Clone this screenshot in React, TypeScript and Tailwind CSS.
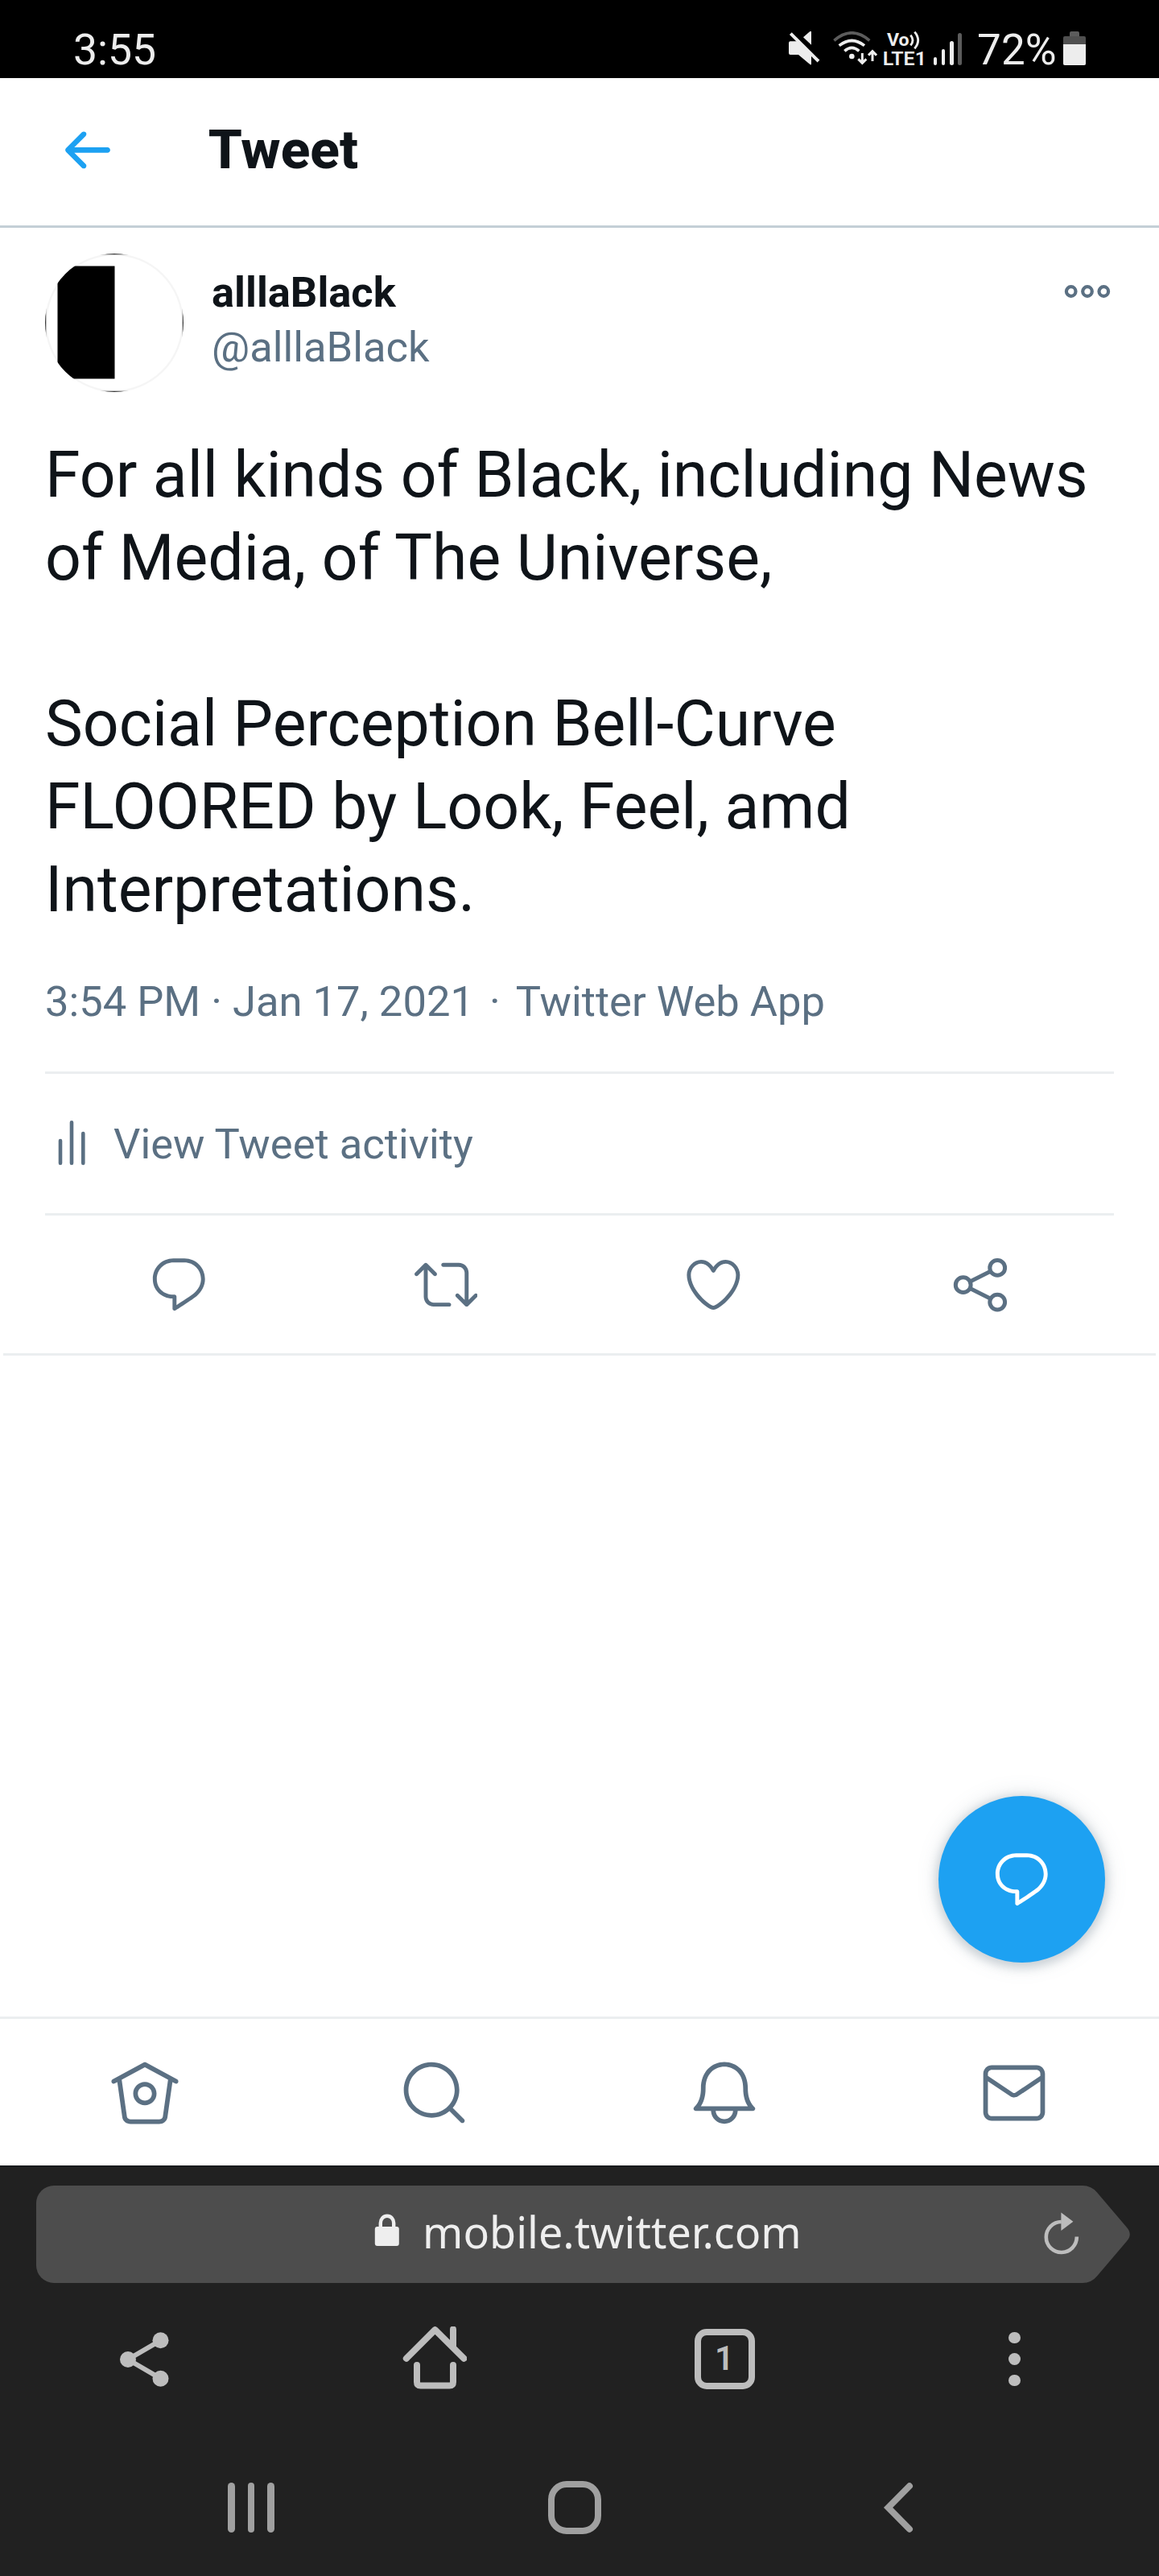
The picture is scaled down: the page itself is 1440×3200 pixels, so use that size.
import React from "react";

const REPLY =
  "M14.046 2.242l-4.148-.01h-.002c-4.374 0-7.8 3.427-7.8 7.802 0 4.098 3.186 7.206 7.465 7.37v3.828c0 .108.044.286.12.403.142.225.384.347.632.347.138 0 .277-.038.402-.118.264-.168 6.473-4.14 8.088-5.506 1.902-1.61 3.04-3.97 3.043-6.312v-.017c-.006-4.367-3.43-7.787-7.8-7.788zm3.787 12.972c-1.134.96-4.862 3.405-6.772 4.643V16.67c0-.414-.335-.75-.75-.75h-.396c-3.66 0-6.318-2.476-6.318-5.886 0-3.534 2.768-6.302 6.3-6.302l4.147.01h.002c3.532 0 6.3 2.766 6.302 6.296-.003 1.91-.942 3.844-2.514 5.176z";
const RETWEET =
  "M23.77 15.67c-.292-.293-.767-.293-1.06 0l-2.22 2.22V7.65c0-2.068-1.683-3.75-3.75-3.75h-5.85c-.414 0-.75.336-.75.75s.336.75.75.75h5.85c1.24 0 2.25 1.01 2.25 2.25v10.24l-2.22-2.22c-.293-.293-.768-.293-1.06 0s-.294.768 0 1.06l3.5 3.5c.145.147.337.22.53.22s.383-.072.53-.22l3.5-3.5c.294-.292.294-.767 0-1.06zm-10.66 3.28H7.26c-1.24 0-2.25-1.01-2.25-2.25V6.46l2.22 2.22c.148.147.34.22.532.22s.384-.073.53-.22c.293-.293.293-.768 0-1.06l-3.5-3.5c-.293-.294-.768-.294-1.06 0l-3.5 3.5c-.294.292-.294.767 0 1.06s.767.293 1.06 0l2.22-2.22V16.7c0 2.068 1.683 3.75 3.75 3.75h5.85c.414 0 .75-.336.75-.75s-.337-.75-.75-.75z";
const HEART =
  "M12 21.638h-.014C9.403 21.59 1.95 14.856 1.95 8.478c0-3.064 2.525-5.754 5.403-5.754 2.29 0 3.83 1.58 4.646 2.73.814-1.148 2.354-2.73 4.645-2.73 2.88 0 5.404 2.69 5.404 5.755 0 6.376-7.454 13.11-10.037 13.157H12zM7.354 4.225c-2.08 0-3.903 1.988-3.903 4.255 0 5.74 7.034 11.596 8.55 11.658 1.518-.062 8.55-5.917 8.55-11.658 0-2.267-1.823-4.255-3.903-4.255-2.528 0-3.94 2.936-3.952 2.965-.23.562-1.156.562-1.387 0-.014-.03-1.425-2.965-3.954-2.965z";
const BACK =
  "M20 11H7.414l4.293-4.293c.39-.39.39-1.023 0-1.414s-1.023-.39-1.414 0l-6 6c-.39.39-.39 1.023 0 1.414l6 6c.195.195.45.293.707.293s.512-.098.707-.293c.39-.39.39-1.023 0-1.414L7.414 13H20c.553 0 1-.447 1-1s-.447-1-1-1z";
const HOME =
  "M22.46 7.57L12.357 2.115c-.223-.12-.49-.12-.713 0L1.543 7.57c-.364.197-.5.652-.303 1.017.135.25.394.393.66.393.12 0 .243-.03.356-.09l.815-.44L4.7 19.963c.214 1.215 1.308 2.062 2.658 2.062h9.282c1.352 0 2.445-.848 2.663-2.087l1.626-11.49.818.442c.364.193.82.06 1.017-.304.196-.363.06-.818-.304-1.016zm-4.638 12.133c-.107.606-.703.822-1.18.822H7.36c-.48 0-1.075-.216-1.178-.798L4.48 7.69 12 3.628l7.522 4.06-1.7 12.015zM8.22 12.184c0 2.084 1.695 3.78 3.78 3.78s3.78-1.696 3.78-3.78-1.695-3.78-3.78-3.78-3.78 1.696-3.78 3.78zm6.06 0c0 1.258-1.022 2.28-2.28 2.28s-2.28-1.022-2.28-2.28 1.022-2.28 2.28-2.28 2.28 1.022 2.28 2.28z";
const SEARCH =
  "M21.53 20.47l-3.66-3.66C19.195 15.24 20 13.214 20 11c0-4.97-4.03-9-9-9s-9 4.03-9 9 4.03 9 9 9c2.215 0 4.24-.804 5.808-2.13l3.66 3.66c.147.146.34.22.53.22s.385-.073.53-.22c.295-.293.295-.767.002-1.06zM3.5 11c0-4.135 3.365-7.5 7.5-7.5s7.5 3.365 7.5 7.5-3.365 7.5-7.5 7.5-7.5-3.365-7.5-7.5z";
const BELL =
  "M21.697 16.468c-.02-.016-2.14-1.64-2.103-6.03.02-2.532-.812-4.782-2.347-6.335C15.872 2.71 14.01 1.94 12.005 1.93h-.013c-2.004.01-3.866.78-5.242 2.174-1.534 1.553-2.368 3.802-2.346 6.334.037 4.33-2.02 5.967-2.102 6.03-.26.193-.366.53-.265.838.102.308.39.515.712.515h4.92c.102 2.31 1.997 4.16 4.33 4.16s4.226-1.85 4.327-4.16h4.922c.322 0 .61-.206.71-.514.103-.307-.003-.645-.263-.838zM12 20.478c-1.505 0-2.73-1.177-2.828-2.658h5.656c-.1 1.48-1.323 2.66-2.828 2.66zM4.38 16.32c.74-1.132 1.548-3.028 1.524-5.896-.018-2.16.644-3.982 1.913-5.267C8.91 4.05 10.397 3.437 12 3.43c1.603.008 3.087.62 4.18 1.728 1.27 1.285 1.933 3.106 1.915 5.267-.024 2.868.785 4.765 1.525 5.896H4.38z";
const MAIL =
  "M19.25 3.018H4.75C3.233 3.018 2 4.252 2 5.77v12.495c0 1.518 1.233 2.753 2.75 2.753h14.5c1.517 0 2.75-1.235 2.75-2.753V5.77c0-1.518-1.233-2.752-2.75-2.752zm-14.5 1.5h14.5c.69 0 1.25.56 1.25 1.25v.714l-8.05 5.367c-.273.18-.626.182-.9-.002L3.5 6.482v-.714c0-.69.56-1.25 1.25-1.25zm14.5 14.998H4.75c-.69 0-1.25-.56-1.25-1.25V8.24l7.24 4.83c.383.256.822.384 1.26.384.44 0 .877-.128 1.26-.383l7.24-4.83v10.022c0 .69-.56 1.25-1.25 1.25z";

function Glyph({ d, className }: { d: string; className: string }) {
  return (
    <svg viewBox="0 0 24 24" fill="currentColor" className={className}>
      <path d={d} />
    </svg>
  );
}

function StatusIcons() {
  return (
    <div className="flex items-start">
      {/* Muted speaker */}
      <svg className="h-[42px] w-[39px]" viewBox="119 116 117 126" fill="#ededed">
        <path d="M125 153H150L203 206V240H199L155 203H125Q119 203 119 197V159Q119 153 125 153Z" />
        <path d="M173 138L198 116H203V166Z" />
        <path d="M126 124L230 227" stroke="#ededed" strokeWidth="12" />
      </svg>
      {/* Wi-Fi with transfer arrows */}
      <svg className="ml-[16px] h-[42px] w-[55px]" viewBox="284 116 165 126" fill="none" stroke="#ededed" strokeWidth="11">
        <path d="M288 150Q354 93 420 150" stroke="#5c5c5c" />
        <path d="M307 169Q354 132 401 169" />
        <path d="M327 189Q354 165 381 189" />
        <circle cx="354" cy="209" r="10" fill="#ededed" stroke="none" />
        <path d="M393 197V232M378 219L393 234L408 219" strokeWidth="9" />
        <path d="M431 227V191M416 205L431 190L446 205" strokeWidth="9" />
      </svg>
      {/* VoLTE badge */}
      <svg className="ml-[7px] h-[42px] w-[51px] overflow-visible font-[Roboto]" viewBox="470 116 153 126" fill="#ededed">
        <text x="485" y="169" fontSize="67" fontWeight="700" textLength="83" lengthAdjust="spacingAndGlyphs">Vo</text>
        <path d="M573 130Q589 149 573 168M588 118Q614 149 588 180" fill="none" stroke="#ededed" strokeWidth="8.5" />
        <text x="469" y="241" fontSize="73" fontWeight="600" textLength="163" lengthAdjust="spacingAndGlyphs">LTE1</text>
      </svg>
      {/* Cellular signal */}
      <div className="ml-[12px] flex h-[42px] items-end gap-[5.67px]">
        <div className="h-[10px] w-[4.67px] rounded-full bg-[#ededed]" />
        <div className="h-[20px] w-[4.67px] rounded-full bg-[#ededed]" />
        <div className="h-[30px] w-[4.67px] rounded-full bg-[#ededed]" />
        <div className="h-[39.5px] w-[4.67px] rounded-full bg-[#5c5c5c]" />
      </div>
    </div>
  );
}

function StatusBar() {
  return (
    <div className="flex h-[97px] items-start bg-black text-[#ededed]">
      <div className="w-[889px] pt-[35px] pl-[91px] text-[53.5px] leading-[54px]">3:55</div>
      <div className="ml-[90.5px] pt-[38.5px]">
        <StatusIcons />
      </div>
      <div className="ml-[19px] w-[98px] pt-[35px] text-[53px] leading-[54px]">72%</div>
      <div className="ml-[9px] flex flex-col items-center pt-[38.5px]">
        <div className="h-[6px] w-[12.5px] rounded-t-[2px] bg-[#5c5c5c]" />
        <div className="flex h-[36px] w-[28px] flex-col justify-end overflow-hidden rounded-[2px] bg-[#505050]">
          <div className="h-[25.5px] bg-[#ededed]" />
        </div>
      </div>
    </div>
  );
}

function Avatar() {
  return (
    <svg className="h-[172px] w-[172px] shrink-0" viewBox="0 0 172 172">
      <defs>
        <clipPath id="avatar-round">
          <circle cx="86" cy="86" r="86" />
        </clipPath>
      </defs>
      <g clipPath="url(#avatar-round)">
        <rect width="172" height="172" fill="#fff" />
        <path d="M0 0.7H172M0 171.3H172M0.6 0V172M171.4 0V172" stroke="#3a3a3a" strokeWidth="1.3" />
        <rect x="15.5" y="15.5" width="71" height="140" fill="#000" />
      </g>
      <circle cx="86" cy="86" r="84.8" fill="none" stroke="#000" strokeOpacity="0.04" strokeWidth="2.4" />
    </svg>
  );
}

function Tweet() {
  return (
    <div className="h-[1398px]">
      <div className="px-14">
        <div className="flex pt-8">
          <Avatar />
          <div className="ml-[35px] flex-1 pt-[14px] text-[52.5px] leading-[68px]">
            <div className="font-bold">alllaBlack</div>
            <div className="text-[#5b7083]">@alllaBlack</div>
          </div>
          <svg className="mt-[37px] mr-[3px] h-5 w-[60px]" viewBox="0 0 60 20" fill="none" stroke="#5b7083" strokeWidth="4.2">
            <circle cx="9.7" cy="10" r="5.8" />
            <circle cx="30" cy="10" r="5.8" />
            <circle cx="50.3" cy="10" r="5.8" />
          </svg>
        </div>
        <div className="mt-[52px] text-[78.75px] leading-[103px] whitespace-pre">
          <p>For all kinds of Black, including News</p>
          <p>of Media, of The Universe,</p>
          <p>&nbsp;</p>
          <p>Social Perception Bell-Curve</p>
          <p>FLOORED by Look, Feel, amd</p>
          <p>Interpretations.</p>
        </div>
        <div className="mt-[52px] h-[122px] text-[52.5px] leading-[70px] whitespace-pre text-[#5b7083]">
          3:54 PM · Jan 17, 2021<span className="px-[19px]">·</span>Twitter Web App
        </div>
        <div className="flex h-[179px] border-y-3 border-[#ebeef0] text-[#5b7083]">
          <svg className="mt-[56px] ml-[16px] h-[60px] w-[34px]" viewBox="0 0 34 60" stroke="currentColor" strokeWidth="4.6" strokeLinecap="round">
            <path d="M3 27V55M17 4.3V55M31.3 18V55" />
          </svg>
          <span className="mt-[52px] ml-[35px] text-[52.5px] leading-[70px]">View Tweet activity</span>
        </div>
        <div className="grid h-[171px] grid-cols-4 justify-items-center pt-[45.5px] text-[#5b7083]">
          <Glyph d={REPLY} className="h-[78.75px] w-[78.75px]" />
          <Glyph d={RETWEET} className="h-[78.75px] w-[78.75px]" />
          <Glyph d={HEART} className="h-[78.75px] w-[78.75px]" />
          <svg className="h-[79px] w-[79px]" viewBox="0 0 79 79" fill="none" stroke="currentColor" strokeWidth="5">
            <circle cx="17.7" cy="40.2" r="9.4" />
            <circle cx="60.2" cy="18.9" r="9.4" />
            <circle cx="60.2" cy="61.6" r="9.4" />
            <path d="M26.3 36L51.7 23.2M26.3 44.6L51.7 57.3" />
          </svg>
        </div>
      </div>
      <div className="mx-1 h-[3px] bg-[#ebeef0]" />
    </div>
  );
}

function UrlBar() {
  return (
    <div className="mt-[23px] ml-[44.5px] flex h-[121px]">
      <div className="flex w-[1265px] rounded-l-[22px] bg-[#4d4d4d]">
        <svg className="mt-[35px] ml-[420.5px] h-[41px] w-[32px]" viewBox="0 0 32 41">
          <rect x="0.8" y="16" width="30" height="24" rx="3" fill="#eee" />
          <path d="M7.8 18V11.5a8.2 8.8 0 0 1 16.4 0V18" fill="none" stroke="#eee" strokeWidth="4.4" />
        </svg>
        <div className="ml-[28px] pt-[22px] font-['Noto_Sans',sans-serif] text-[53.9px] leading-[70px] text-[#eee]">
          mobile.twitter.com
        </div>
      </div>
      {/* Pointed end of the address field with the reload mark */}
      <svg className="-ml-px h-[121px] w-[96px] overflow-visible" viewBox="0 0 96 121">
        <path d="M0 0H36Q47 0 54 8.5L91 52Q98.5 60.5 91 69L54 112.5Q47 121 36 121H0Z" fill="#4d4d4d" />
        <path d="M28.8 63.5A19 19 0 1 1 9.8 45" fill="none" stroke="#bdbdbd" strokeWidth="4.6" />
        <path d="M9.4 33.5L24.4 44.7L9.4 56Z" fill="#bdbdbd" />
      </svg>
    </div>
  );
}

function BrowserChrome() {
  return (
    <div className="h-[510px] overflow-hidden border-t-2 border-[#181b1d] bg-[#212121]">
      <UrlBar />
      <div className="mt-[49px] grid h-[90px] grid-cols-4 items-center justify-items-center">
        <svg className="mt-px -ml-[3px] h-[70px] w-[62px]" viewBox="0 0 62 70" fill="#bdbdbd">
          <path d="M51.5 11.3L11 35L51.5 58.7" fill="none" stroke="#bdbdbd" strokeWidth="6" />
          <circle cx="51.5" cy="11.3" r="10" />
          <circle cx="11" cy="35" r="10" />
          <circle cx="51.5" cy="58.7" r="10" />
        </svg>
        <svg className="h-[80px] w-[80px]" viewBox="0 0 80 80" fill="none" stroke="#bdbdbd" strokeWidth="8" strokeLinecap="round">
          <path d="M4.8 39.8L40.5 4.2L76.5 39.8" strokeLinejoin="round" />
          <path d="M63 3.5V24" />
          <path d="M18 48V69Q18 73.5 22.5 73.5H58.5Q63 73.5 63 69V48" />
        </svg>
        <div className="flex h-[75px] w-[75px] items-center justify-center rounded-[15px] border-8 border-[#bdbdbd] text-[42px] leading-none font-semibold text-[#bdbdbd]">
          1
        </div>
        <div className="mt-px ml-px flex flex-col gap-[12px]">
          <div className="h-[14.5px] w-[14.5px] rounded-full bg-[#bdbdbd]" />
          <div className="h-[14.5px] w-[14.5px] rounded-full bg-[#bdbdbd]" />
          <div className="h-[14.5px] w-[14.5px] rounded-full bg-[#bdbdbd]" />
        </div>
      </div>
      <div className="mt-[107px] flex h-[66px] items-center pl-[283px]">
        <div className="flex gap-4">
          <div className="h-[62px] w-[8.5px] rounded-full bg-[#a0a0a0]" />
          <div className="h-[62px] w-[8.5px] rounded-full bg-[#a0a0a0]" />
          <div className="h-[62px] w-[8.5px] rounded-full bg-[#a0a0a0]" />
        </div>
        <div className="ml-[340px] h-[66px] w-[66px] rounded-[23px] border-8 border-[#a0a0a0]" />
        <svg className="ml-[350px] h-[62px] w-[38px]" viewBox="0 0 38 62" fill="none" stroke="#a0a0a0" strokeWidth="8" strokeLinecap="round">
          <path d="M33 4.3L6.6 31L33 57.7" />
        </svg>
      </div>
    </div>
  );
}

export default function App() {
  return (
    <div className="relative h-[3200px] w-[1440px] overflow-hidden bg-white font-[Roboto,sans-serif] text-[#0f1419]">
      <StatusBar />
      <header className="flex h-[186px] items-center border-b-3 border-[#c4cfd6] pl-[67.5px]">
        <Glyph d={BACK} className="-mt-[4px] h-[78.75px] w-[78.75px] text-[#1da1f2]" />
        <h1 className="-mt-[5px] ml-[112.5px] text-[67.5px] leading-[78px] font-extrabold">Tweet</h1>
      </header>
      <main className="h-[2222px]">
        <Tweet />
      </main>
      <nav className="grid h-[185px] grid-cols-4 justify-items-center border-t-3 border-[#ebeef0] pt-[46px] text-[#5b7083]">
        <Glyph d={HOME} className="h-[92px] w-[92px]" />
        <Glyph d={SEARCH} className="h-[92px] w-[92px]" />
        <Glyph d={BELL} className="h-[92px] w-[92px]" />
        <Glyph d={MAIL} className="h-[92px] w-[92px]" />
      </nav>
      <BrowserChrome />
      <button className="absolute top-[2231px] left-[1166px] flex h-[206.5px] w-[206.5px] items-center justify-center rounded-full bg-[#1da1f2] text-white shadow-[0_0_28px_rgba(101,119,134,0.2),0_3.5px_10.5px_3.5px_rgba(101,119,134,0.25)]">
        <Glyph d={REPLY} className="h-[78.75px] w-[78.75px]" />
      </button>
    </div>
  );
}
